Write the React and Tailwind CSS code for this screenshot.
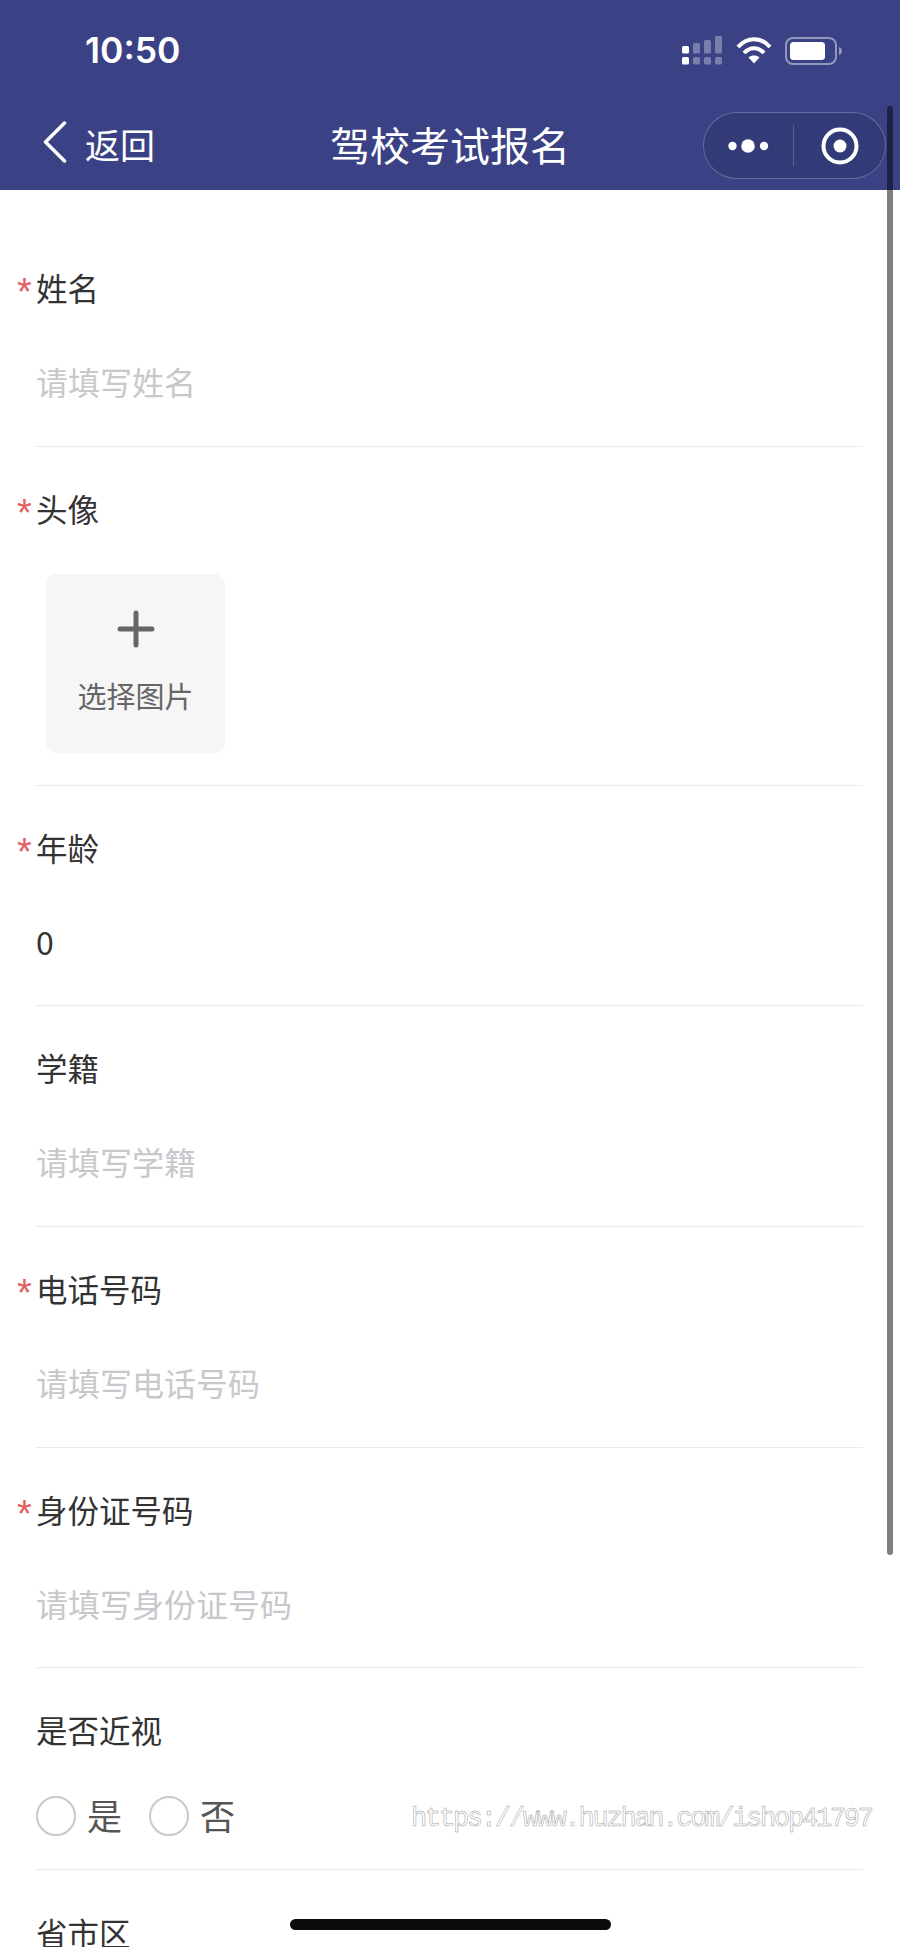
const CJK = 'font-["Noto_Sans_CJK_SC","Noto_Sans",sans-serif]'

function Label({ text, required }) {
  return (
    <div className="flex h-[42px] items-center text-[31.5px] leading-[42px] text-[#333]">
      {required && <span className="-ml-[19px] mt-[10px] w-[19px] font-['Liberation_Sans'] text-[38px] leading-[42px] text-[#e0605f]">*</span>}
      <span>{text}</span>
    </div>
  )
}

function TextRow({ label, required, placeholder, value }) {
  return (
    <div className="flex h-[220.7px] flex-col border-b border-[#ebebeb] pt-[40px]">
      <Label text={label} required={required} />
      <div className={`mt-[52px] h-[42px] text-[32px] leading-[42px] ${value ? 'text-[#333]' : 'text-[#c8c8cc]'}`}>
        {value || placeholder}
      </div>
    </div>
  )
}

function Radio({ text }) {
  return (
    <div className="flex items-center gap-[11px]">
      <div className="size-[40px] rounded-full border-2 border-[#c9c9c9]" />
      <span className="-mt-[3px] text-[35px] leading-[42px] text-[#555]">{text}</span>
    </div>
  )
}

function StatusIcons() {
  return (
    <div className="flex items-center">
      <svg width="41" height="29" viewBox="0 0 41 29" fill="#fff">
        <rect x="0" y="10" width="7" height="7.5" rx="1.5" />
        <rect x="0" y="21" width="7" height="7.5" rx="1.5" />
        <g opacity="0.32">
          <rect x="11" y="7" width="7" height="10.5" rx="1.5" />
          <rect x="11" y="21" width="7" height="7.5" rx="1.5" />
          <rect x="22" y="4" width="7" height="13.5" rx="1.5" />
          <rect x="22" y="21" width="7" height="7.5" rx="1.5" />
          <rect x="33" y="0" width="7" height="17.5" rx="1.5" />
          <rect x="33" y="21" width="7" height="7.5" rx="1.5" />
        </g>
      </svg>
      <svg className="ml-[13px]" width="36" height="27" viewBox="0 0 36 27" fill="none" stroke="#fff" strokeWidth="4">
        <path d="M2 10C11-.5 25-.5 34 10" />
        <path d="M8 16c6-6.5 14-6.5 20 0" />
        <path d="M18 26.5l-5.5-6c3.2-2.6 7.8-2.6 11 0z" fill="#fff" stroke="none" />
      </svg>
      <svg className="ml-[13px]" width="58" height="28" viewBox="0 0 58 28" fill="none">
        <rect x="1" y="1" width="50" height="26" rx="7" stroke="#fff" strokeOpacity="0.45" strokeWidth="2" />
        <rect x="5" y="5" width="35" height="18" rx="3.5" fill="#fff" />
        <path d="M54 10c2 .5 3 2 3 4s-1 3.500-3 4z" fill="#fff" fillOpacity="0.45" />
      </svg>
    </div>
  )
}

function Capsule() {
  return (
    <div className="flex h-[67px] w-[183px] items-center rounded-full border border-white/25 bg-[#323a78]">
      <div className="flex flex-1 items-center justify-center">
        <svg width="42" height="16" viewBox="0 0 42 16" fill="#fff">
          <circle cx="4.500" cy="8" r="4.200" />
          <circle cx="20" cy="8" r="6.800" />
          <circle cx="36" cy="8" r="4.200" />
        </svg>
      </div>
      <div className="h-[41px] w-px bg-white/20" />
      <div className="flex w-[91px] items-center justify-center">
        <svg width="38" height="38" viewBox="0 0 38 38" fill="none">
          <circle cx="19" cy="19" r="16.500" stroke="#fff" strokeWidth="4" />
          <circle cx="19" cy="19" r="6.500" fill="#fff" />
        </svg>
      </div>
    </div>
  )
}

export default function App() {
  return (
    <div className={`relative h-[1947px] w-[900px] overflow-hidden bg-white ${CJK}`}>
      <header className="h-[190px] bg-[#3a4285] text-white">
        <div className="flex h-[102px] items-start justify-between pl-[85px] pr-[57px] pt-[28px]">
          <span className="font-['Inter'] text-[35.500px] font-semibold leading-[46px]">10:50</span>
          <div className="pt-[8px]"><StatusIcons /></div>
        </div>
        <div className="relative flex h-[76px] items-center pl-[43px]">
          <svg className="mt-[4px]" width="24" height="42" viewBox="0 0 24 42" fill="none" stroke="#fff" strokeWidth="3.500" strokeLinecap="round" strokeLinejoin="round">
            <path d="M21.500 2L2.500 21l19 19" />
          </svg>
          <span className="ml-[18px] mt-[8px] text-[35px] leading-[46px]">返回</span>
          <span className="absolute left-0 right-0 top-[16px] text-center text-[40px] leading-[52px]">驾校考试报名</span>
          <div className="absolute right-[14px] top-[10px]"><Capsule /></div>
        </div>
      </header>

      <main className="ml-[36px] mr-[37px] pt-[36px]">
        <TextRow label="姓名" required placeholder="请填写姓名" />
        <div className="flex h-[339px] flex-col border-b border-[#ebebeb] pt-[40px]">
          <Label text="头像" required />
          <div className="ml-[10px] mt-[45px] flex h-[179px] w-[179px] flex-col items-center rounded-[10px] bg-[#f6f6f7] pt-[36px]">
            <svg width="38" height="38" viewBox="0 0 38 38" stroke="#666" strokeWidth="5" strokeLinecap="round">
              <path d="M3 19h32M19 3v32" />
            </svg>
            <span className="mt-[27px] text-[29px] leading-[40px] text-[#666]">选择图片</span>
          </div>
        </div>
        <TextRow label="年龄" required value="0" />
        <TextRow label="学籍" placeholder="请填写学籍" />
        <TextRow label="电话号码" required placeholder="请填写电话号码" />
        <TextRow label="身份证号码" required placeholder="请填写身份证号码" />
        <div className="flex h-[202px] flex-col border-b border-[#ebebeb] pt-[40px]">
          <Label text="是否近视" />
          <div className="mt-[46px] flex items-center gap-[27px]">
            <Radio text="是" />
            <Radio text="否" />
          </div>
        </div>
        <div className="pt-[41px]">
          <Label text="省市区" />
        </div>
      </main>

      <div className="absolute left-[411px] top-[1805px] font-['Liberation_Mono'] text-[27px] leading-[28px] tracking-[-2.24px] text-transparent [-webkit-text-stroke:0.5px_#999]">
        https://www.huzhan.com/ishop41797
      </div>
      <div className="absolute right-[7px] top-[106px] h-[1449px] w-[6px] rounded-full bg-black/50" />
      <div className="absolute left-[290px] top-[1919px] h-[11px] w-[321px] rounded-full bg-[#0c0c0c]" />
    </div>
  )
}
